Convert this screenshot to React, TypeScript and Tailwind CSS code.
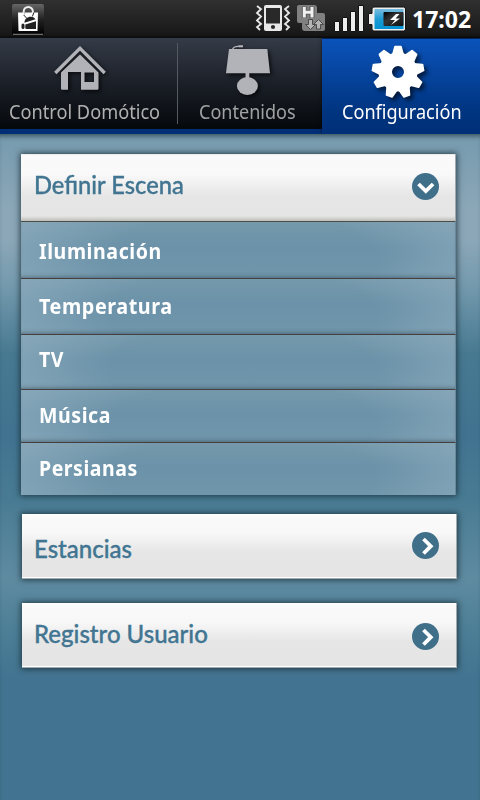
import React from "react";

const ui = "font-['Noto_Sans','Open_Sans',sans-serif]";

function MarketIcon() {
  return (
    <svg width="32" height="32" viewBox="0 0 32 32" className="block">
      <defs>
        <linearGradient id="tile" x1="0" y1="0" x2="0" y2="1">
          <stop offset="0" stopColor="#666" />
          <stop offset="0.5" stopColor="#222" />
          <stop offset="1" stopColor="#000" />
        </linearGradient>
      </defs>
      <rect x="0" y="1" width="32" height="31" rx="2" fill="url(#tile)" />
      <path d="M1 31.3h30" stroke="#8a8a8a" />
      <path d="M11.7 12V8.500a4.600 4.600 0 0 1 9.200 0V12" fill="none" stroke="#eee" strokeWidth="2" />
      <path d="M6 9.500h5v2h2v-2h7v2h2v-2h4L25.500 28h-19z" fill="#fff" />
      <path d="M12.500 19.700C12 14 20.500 11.500 23.500 16.300z" fill="#222" />
      <path d="M13.300 21.500L24 18.200V26h-9.500q-1.200 0-1.200-1z" fill="#222" />
      <rect x="9.500" y="20.500" width="3" height="5.500" rx="1.500" fill="#222" />
      <path d="M14.500 15l-2.800-3M20.300 13.500l1.700-4" stroke="#222" strokeWidth="1" />
    </svg>
  );
}

function StatusIcons() {
  return (
    <svg width="152" height="38" viewBox="0 0 152 38" className="block">
      <defs>
        <linearGradient id="charge" x1="0" y1="0" x2="0" y2="1">
          <stop offset="0" stopColor="#78bce0" />
          <stop offset="0.5" stopColor="#1d9bd2" />
          <stop offset="1" stopColor="#0093d5" />
        </linearGradient>
        <linearGradient id="cell" x1="0" y1="0" x2="1" y2="1">
          <stop offset="0" stopColor="#000" />
          <stop offset="0.4" stopColor="#333" />
          <stop offset="1" stopColor="#111" />
        </linearGradient>
      </defs>
      <path d="M2 6l4 3-4 4 4 3.500-4 4 4 3.500-4 3 3 3M34 6l-4 3 4 4-4 3.500 4 4-4 3.500 4 3-3 3" fill="none" stroke="#e8e8e8" strokeWidth="1.800" />
      <rect x="9" y="5" width="18" height="26" rx="2" fill="#e8e8e8" />
      <rect x="11" y="8" width="14" height="15.500" fill="#292929" />
      <circle cx="18" cy="27" r="2.100" fill="#292929" />
      <path d="M44 5h15q3 0 3 3v5h6q2 0 2 2v14q0 2-2 2H50q-3 0-3-3v-5h-3q-2 0-2-2V7q0-2 2-2z" fill="#808080" />
      <path d="M49.300 6.500v11.500M57 6.500v11.500M49.300 12.200H57" fill="none" stroke="#5b5b5b" strokeWidth="5" />
      <path d="M49.300 7v10.500M57 7v10.500M49.300 12.200H57" fill="none" stroke="#f0f0f0" strokeWidth="3" />
      <path d="M53.500 19.500h4v5h3l-5 5-5-5h3zM61.500 29v-4.500h-3l5-5 5 5h-3V29z" fill="#b5b5b5" stroke="#4a4a4a" />
      <path d="M79.500 21.500h5v10h-5zM87.500 17.500h5v14h-5zM95.500 11.500h5v20h-5zM103.500 5.500h5v26h-5z" fill="#eee" stroke="#111" />
      <path d="M113.500 13.500h3.500V9q0-2 2-2h29.500q2 0 2 2v20q0 2-2 2H119q-2 0-2-2v-4.500h-3.500z" fill="#eee" stroke="#111" />
      <rect x="119.500" y="9" width="29" height="20" fill="url(#charge)" />
      <rect x="128.500" y="12" width="20" height="14" rx="1" fill="url(#cell)" />
      <path d="M141 14l-6 6 5 0-4 5 9-6.500-4.500 0 4-4.500z" fill="#fff" />
    </svg>
  );
}

function HouseIcon() {
  return (
    <svg width="52" height="48" viewBox="0 0 52 48" className="block overflow-visible drop-shadow-[2px_2px_2px_rgba(0,0,0,.7)]">
      <path d="M1.300 30L26 5.300 50.700 30" fill="none" stroke="#b2b3b8" strokeWidth="3.300" />
      <path fillRule="evenodd" d="M7 29.500L26 11.500l18.500 18v16q0 1.200-1.200 1.200H27V29H14v17.700H8.200Q7 46.700 7 45.500zM30.500 29.500v9.500h9.500v-9.500z" fill="#b2b3b8" />
    </svg>
  );
}

function LampIcon() {
  return (
    <svg width="46" height="52" viewBox="0 0 46 52" className="block drop-shadow-[2px_2px_2px_rgba(0,0,0,.7)]">
      <path d="M6.500 5Q8 2.300 12 2.300h5" fill="none" stroke="#b2b3b8" strokeWidth="1.200" />
      <path d="M12.500 2.300h4.500" stroke="#b2b3b8" strokeWidth="2" />
      <path d="M3 5h38.300L44 29.300H0z" fill="#b2b3b8" />
      <path d="M19.500 29h3.800v6h-3.800z" fill="#b2b3b8" />
      <ellipse cx="21.400" cy="42" rx="10.500" ry="9" fill="#b2b3b8" />
    </svg>
  );
}

function GearIcon() {
  return (
    <svg width="54" height="54" viewBox="-27 -27 54 54" className="block overflow-visible drop-shadow-[3px_3px_2px_rgba(0,0,0,.6)]">
      <g fill="#fff">
        <circle r="12.700" fill="none" stroke="#fff" strokeWidth="13.400" />
        {Array.from({ length: 9 }, (_, i) => (
          <path key={i} d="M-6.200-17L-3.800-25.500Q-3.500-26.300-3-26.300H3Q3.500-26.300 3.800-25.500L6.200-17z" transform={"rotate(" + i * 40 + ")"} />
        ))}
      </g>
    </svg>
  );
}

function Chevron({ down = false }: { down?: boolean }) {
  return (
    <svg width="27" height="27" viewBox="0 0 27 27" className="block">
      <circle cx="13.500" cy="13.500" r="13.500" fill="#406f8a" />
      <path d={down ? "M6.500 11l7.300 7 7.300-7" : "M11.500 7l7.300 7.200L11.500 21.500"} fill="none" stroke="#fff" strokeWidth="3.800" />
    </svg>
  );
}

function Label({ text, className }: { text: string; className: string }) {
  return <span className={"block origin-left whitespace-nowrap " + className}>{text}</span>;
}

const rowBase =
  "box-border pl-[18px] border-b-[#453f40] border-r border-r-[#6a8a9b] bg-[radial-gradient(ellipse_56%_150%_at_51%_65%,rgba(139,170,188,0)_55%,rgba(139,170,188,.9)_105%),linear-gradient(#7599ab,#6b92a9_45%,#7096ab)]";

const innerEdge = " shadow-[inset_0_-4px_4px_-3px_rgba(40,60,70,.5)]";

const rows = [
  { text: "Iluminación", box: "h-[57px] pt-[14px] border-b" + innerEdge, label: "scale-x-[.934]" },
  { text: "Temperatura", box: "h-[56px] pt-[12px] border-b" + innerEdge, label: "scale-x-[.942]" },
  { text: "TV", box: "h-[55px] pt-[9px] border-b" + innerEdge, label: "scale-x-[.93]" },
  { text: "Música", box: "h-[53px] pt-[10px] border-b" + innerEdge, label: "scale-x-[.932]" },
  { text: "Persianas", box: "h-[52px] pt-[10px]", label: "scale-x-[.928]" },
];

const closedPanel =
  "ml-px flex h-[65px] w-[435px] justify-between border-r border-b border-[#a0aaae] bg-[linear-gradient(#fff_0px,#fafafa_3px,#f8f8f8_19px,#e6e6e6_38px,#e5e5e5_63px,#fff_63px)] pl-3 pr-[17px] shadow-[0_0_6px_1px_rgba(20,40,50,.8)]";

const heading = "font-['Lato',sans-serif] font-medium text-[24px] leading-[30px] text-[#417591] [-webkit-text-stroke:.35px_#417591]";

export default function App() {
  return (
    <div className={"flex h-[800px] w-[480px] flex-col overflow-hidden " + ui}>
      <div className="flex h-[38px] shrink-0 items-start border-b-2 border-[#101010] bg-[linear-gradient(#303030,#171717)]">
        <div className="ml-3 mt-[3px]"><MarketIcon /></div>
        <div className="ml-[211px] h-[38px]"><StatusIcons /></div>
        <Label text="17:02" className="ml-[5px] mt-[5px] text-[23px] font-bold leading-[28px] text-white" />
      </div>
      <nav className="flex h-[96px] shrink-0 bg-[#002f77] shadow-[0_2px_5px_rgba(0,0,0,.55)]">
        <div className="flex h-[91px] w-[322px] bg-[linear-gradient(#353b47,#1b2028_50%,#05080b)]">
          <div className="h-[91px] w-[177px] pt-[5px]">
            <div className="ml-[54px]"><HouseIcon /></div>
            <Label text="Control Domótico" className="ml-[9px] mt-[8px] scale-x-[.957] text-[19px] leading-[26px] text-[#b0b0b0]" />
          </div>
          <div className="mt-[5px] h-[81px] w-px bg-[#555960]" />
          <div className="w-[144px] pt-[6px]">
            <div className="ml-[48px]"><LampIcon /></div>
            <Label text="Contenidos" className="ml-[21px] mt-[3px] scale-x-[.95] text-[19px] leading-[26px] text-[#a0a1a2]" />
          </div>
        </div>
        <div className="mt-px w-[158px] bg-[linear-gradient(#0b53ba,#003581_75%,#002f77)] pt-[6px] shadow-[0_0_4px_rgba(0,0,0,.6)]">
          <div className="ml-[49px]"><GearIcon /></div>
          <Label text="Configuración" className="ml-[20px] scale-x-[.953] text-[19px] leading-[26px] text-white" />
        </div>
      </nav>
      <main className="flex-1 bg-[linear-gradient(#769aae_0px,#8ba7b8_75px,#8ba7b8_105px,#759aae_150px,#477991_220px,#417390_300px,#487b93_365px,#5f8ba1_445px,#4e8097_490px,#427390_545px)] pl-[21px] pt-[20px] shadow-[inset_0_5px_5px_-3px_rgba(30,50,60,.7)]">
        <section className="w-[435px] shadow-[0_0_6px_1px_rgba(20,40,50,.8)]">
          <header className="flex h-[68px] justify-between border-b border-r border-b-[#4c4c49] border-r-[#a0aaae] bg-[linear-gradient(#ddd_0px,#fafafa_1px,#f9f9f9_20px,#e6e6e6_42px,#e5e5e5_62px,#bdbdb9_67px)] pl-[13px] pr-[16px]">
            <Label text="Definir Escena" className={"mt-[16px] scale-x-[.988] " + heading} />
            <div className="mt-[19px]"><Chevron down /></div>
          </header>
          {rows.map((r) => (
            <div key={r.text} className={rowBase + " " + r.box}>
              <Label text={r.text} className={"text-[21px] font-bold leading-[30px] tracking-[.6px] text-white " + r.label} />
            </div>
          ))}
        </section>
        <section className={closedPanel + " mt-[19px]"}>
          <Label text="Estancias" className={"mt-[20px] " + heading} />
          <div className="mt-[18px]"><Chevron /></div>
        </section>
        <section className={closedPanel + " mt-[24px]"}>
          <Label text="Registro Usuario" className={"mt-[16px] " + heading} />
          <div className="mt-[20px]"><Chevron /></div>
        </section>
      </main>
    </div>
  );
}
